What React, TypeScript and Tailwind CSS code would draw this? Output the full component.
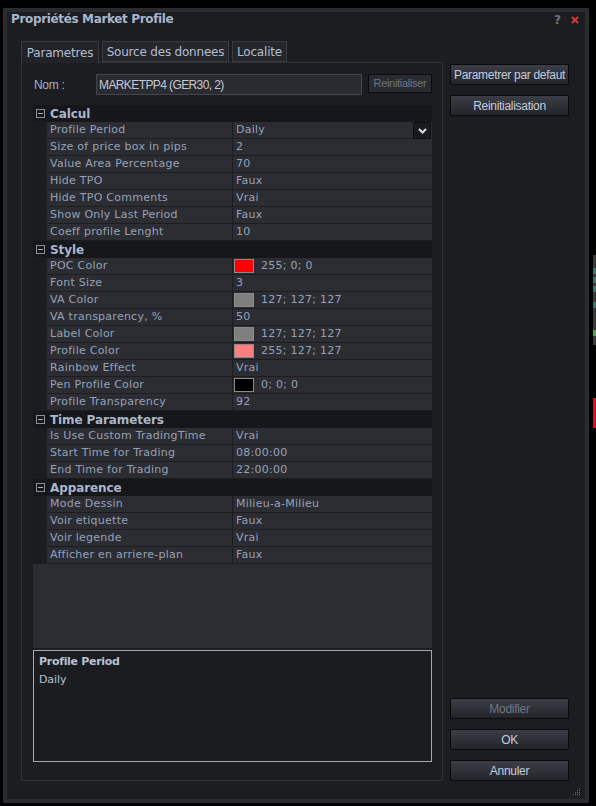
import React from "react";

type Row =
  | { kind: "cat"; label: string }
  | { kind: "prop"; label: string; value: string; swatch?: string; dropdown?: boolean };

const rows: Row[] = [
  { kind: "cat", label: "Calcul" },
  { kind: "prop", label: "Profile Period", value: "Daily", dropdown: true },
  { kind: "prop", label: "Size of price box in pips", value: "2" },
  { kind: "prop", label: "Value Area Percentage", value: "70" },
  { kind: "prop", label: "Hide TPO", value: "Faux" },
  { kind: "prop", label: "Hide TPO Comments", value: "Vrai" },
  { kind: "prop", label: "Show Only Last Period", value: "Faux" },
  { kind: "prop", label: "Coeff profile Lenght", value: "10" },
  { kind: "cat", label: "Style" },
  { kind: "prop", label: "POC Color", value: "255; 0; 0", swatch: "#ff0000" },
  { kind: "prop", label: "Font Size", value: "3" },
  { kind: "prop", label: "VA Color", value: "127; 127; 127", swatch: "#7f7f7f" },
  { kind: "prop", label: "VA transparency, %", value: "50" },
  { kind: "prop", label: "Label Color", value: "127; 127; 127", swatch: "#7f7f7f" },
  { kind: "prop", label: "Profile Color", value: "255; 127; 127", swatch: "#ff7f7f" },
  { kind: "prop", label: "Rainbow Effect", value: "Vrai" },
  { kind: "prop", label: "Pen Profile Color", value: "0; 0; 0", swatch: "#000000" },
  { kind: "prop", label: "Profile Transparency", value: "92" },
  { kind: "cat", label: "Time Parameters" },
  { kind: "prop", label: "Is Use Custom TradingTime", value: "Vrai" },
  { kind: "prop", label: "Start Time for Trading", value: "08:00:00" },
  { kind: "prop", label: "End Time for Trading", value: "22:00:00" },
  { kind: "cat", label: "Apparence" },
  { kind: "prop", label: "Mode Dessin", value: "Milieu-a-Milieu" },
  { kind: "prop", label: "Voir etiquette", value: "Faux" },
  { kind: "prop", label: "Voir legende", value: "Vrai" },
  { kind: "prop", label: "Afficher en arriere-plan", value: "Faux" },
];

const gridFont = { fontFamily: "'DejaVu Sans', 'Noto Sans', sans-serif" };
const btnFont = { fontFamily: "'Liberation Sans', Arial, sans-serif" };

function Btn({ label, disabled, className = "" }: { label: string; disabled?: boolean; className?: string }) {
  return (
    <div
      className={`flex h-[21px] w-[119px] items-center justify-center border border-[#0a0a0c] bg-gradient-to-b from-[#3b3e46] to-[#23252b] text-[12px] tracking-[-0.3px] ${
        disabled ? "text-[#6e7480]" : "text-[#c4ccdc]"
      } ${className}`}
      style={btnFont}
    >
      {label}
    </div>
  );
}

function MinusBox() {
  return (
    <div className="ml-[3px] mr-[5px] flex h-[9px] w-[9px] items-center justify-center border border-[#8a8f99]">
      <div className="h-px w-[5px] bg-[#a8aebb]" />
    </div>
  );
}

function GridRow({ row }: { row: Row }) {
  if (row.kind === "cat") {
    return (
      <div className="flex h-[17px] items-center bg-[#16171b]">
        <MinusBox />
        <span className="pt-[1px] text-[12px] font-bold tracking-[-0.1px] text-[#aab6cc]" style={gridFont}>
          {row.label}
        </span>
      </div>
    );
  }
  return (
    <div className="flex h-[17px]">
      <div className="w-[14px] shrink-0 bg-[#1b1c20]" />
      <div className="flex w-[185px] shrink-0 items-center border-b border-[#1c1d21] bg-[#2c2d32] pl-[3px]">
        <span className="whitespace-nowrap pt-[1px] text-[11px] tracking-[0.25px] text-[#95a1b8]" style={gridFont}>
          {row.label}
        </span>
      </div>
      <div className="w-px shrink-0 bg-[#1c1d21]" />
      <div className="relative flex flex-1 items-center border-b border-[#1c1d21] bg-[#2c2d32] pl-[3px]">
        {row.swatch && (
          <div className="mr-[7px] ml-[-2px] h-[14px] w-[20px] shrink-0 border border-[#8a8a8a]" style={{ backgroundColor: row.swatch }} />
        )}
        <span className="whitespace-nowrap pt-[1px] text-[11px] tracking-[0.25px] text-[#95a1b8]" style={gridFont}>
          {row.value}
        </span>
        {row.dropdown && (
          <div className="absolute right-[1px] top-0 flex h-[17px] w-[18px] items-center justify-center border border-[#0e0f12] bg-[#1a1b1f]">
            <svg width="9" height="6" viewBox="0 0 9 6">
              <path d="M1 1 L4.5 4.5 L8 1" stroke="#d8dce4" strokeWidth="2" fill="none" />
            </svg>
          </div>
        )}
      </div>
    </div>
  );
}

export default function App() {
  return (
    <div className="relative h-[806px] w-[596px] overflow-hidden bg-black">
      {/* chart strip at right edge */}
      <div className="absolute left-[593px] top-[255px] h-[90px] w-[3px] bg-[#3a3a3a]" />
      <div className="absolute left-[593px] top-[268px] h-[6px] w-[3px] bg-[#3d7468]" />
      <div className="absolute left-[593px] top-[277px] h-[6px] w-[3px] bg-[#3d7468]" />
      <div className="absolute left-[593px] top-[286px] h-[6px] w-[3px] bg-[#3d7468]" />
      <div className="absolute left-[593px] top-[302px] h-[6px] w-[3px] bg-[#3d7468]" />
      <div className="absolute left-[593px] top-[330px] h-[6px] w-[3px] bg-[#3fae3f]" />
      <div className="absolute left-[593px] top-[398px] h-[30px] w-[3px] bg-[#e01010]" />

      {/* dialog */}
      <div className="absolute left-[3px] top-[8px] flex h-[795px] w-[586px] flex-col border-[4px] border-[#2b2c31] bg-[#1c1d21]">
        {/* title */}
        <div className="relative flex h-[29px] shrink-0 items-start">
          <span
            className="ml-[4px] mt-[0px] text-[12px] font-bold leading-[14px] tracking-[-0.35px] text-[#aab6cc]"
            style={gridFont}
          >
            Propriétés Market Profile
          </span>
          <span className="absolute left-[547px] top-[1px] text-[12px] font-bold leading-[14px] text-[#6f737c]" style={gridFont}>
            ?
          </span>
          <svg className="absolute left-[564px] top-[4px]" width="8" height="8" viewBox="0 0 8 8">
            <path d="M1 1 L7 7 M7 1 L1 7" stroke="#d23a3a" strokeWidth="2.2" />
          </svg>
        </div>

        <div className="flex flex-1">
          {/* left column */}
          <div className="ml-[14px] flex w-[422px] flex-col">
            {/* tabs */}
            <div className="flex h-[21px] gap-[3px] text-[12px] tracking-[-0.2px] text-[#b3bdd0]" style={gridFont}>
              <div className="relative z-10 flex h-[22px] w-[78px] items-center justify-center border border-b-0 border-[#3a3b41] bg-[#222328]">
                Parametres
              </div>
              <div className="flex w-[127px] items-center justify-center border border-[#3a3b41] bg-[#25262b]">
                Source des donnees
              </div>
              <div className="flex w-[55px] items-center justify-center border border-[#3a3b41] bg-[#25262b]">
                Localite
              </div>
            </div>
            {/* panel */}
            <div className="flex h-[719px] flex-col border border-[#303137] bg-[#1c1d21] pl-[11px] pr-[10px] pt-[11px]">
              {/* nom */}
              <div className="flex h-[21px] items-center">
                <span className="w-[63px] pl-[1px] text-[12px] tracking-[-0.3px] text-[#a8b0c0]" style={btnFont}>
                  Nom :
                </span>
                <div className="flex h-[21px] w-[266px] items-center border border-[#46474d] bg-[#2a2b30] pl-[2px] text-[12px] tracking-[-0.6px] text-[#c3c9d6]" style={btnFont}>
                  MARKETPP4 (GER30, 2)
                </div>
                <div
                  className="ml-[6px] flex h-[19px] w-[64px] items-center justify-center self-start border border-[#0a0a0c] bg-[#2a2b31] text-[11px] tracking-[-0.3px] text-[#6e7480]"
                  style={btnFont}
                >
                  Reinitialiser
                </div>
              </div>

              {/* grid */}
              <div className="mt-[10px] flex h-[543px] w-[399px] flex-col bg-[#2c2d32]">
                {rows.map((r, i) => (
                  <GridRow key={i} row={r} />
                ))}
              </div>

              {/* description */}
              <div className="mt-[2px] h-[112px] w-[399px] border border-[#a8a8a8] bg-[#1b1c20] px-[5px] pt-[3px]">
                <div className="text-[11px] font-bold leading-[16px] tracking-[-0.3px] text-[#b7c1d4]" style={gridFont}>
                  Profile Period
                </div>
                <div className="mt-[2px] text-[11px] leading-[16px] tracking-[-0.1px] text-[#b7c1d4]" style={gridFont}>
                  Daily
                </div>
              </div>
            </div>
          </div>

          {/* right column */}
          <div className="ml-[7px] flex w-[119px] flex-col pt-[23px] pb-[18px]">
            <Btn label="Parametrer par defaut" />
            <Btn label="Reinitialisation" className="mt-[10px]" />
            <div className="flex-1" />
            <Btn label="Modifier" disabled />
            <Btn label="OK" className="mt-[10px]" />
            <Btn label="Annuler" className="mt-[10px]" />
          </div>
        </div>

        {/* resize grip */}
        <svg className="absolute bottom-[3px] right-[4px]" width="8" height="8" viewBox="0 0 8 8">
          <rect x="6" y="0" width="1" height="1" fill="#6a6d75" />
          <rect x="4" y="2" width="1" height="1" fill="#6a6d75" />
          <rect x="6" y="2" width="1" height="1" fill="#6a6d75" />
          <rect x="2" y="4" width="1" height="1" fill="#6a6d75" />
          <rect x="4" y="4" width="1" height="1" fill="#6a6d75" />
          <rect x="6" y="4" width="1" height="1" fill="#6a6d75" />
          <rect x="0" y="6" width="1" height="1" fill="#6a6d75" />
          <rect x="2" y="6" width="1" height="1" fill="#6a6d75" />
          <rect x="4" y="6" width="1" height="1" fill="#6a6d75" />
          <rect x="6" y="6" width="1" height="1" fill="#6a6d75" />
        </svg>
      </div>
    </div>
  );
}
